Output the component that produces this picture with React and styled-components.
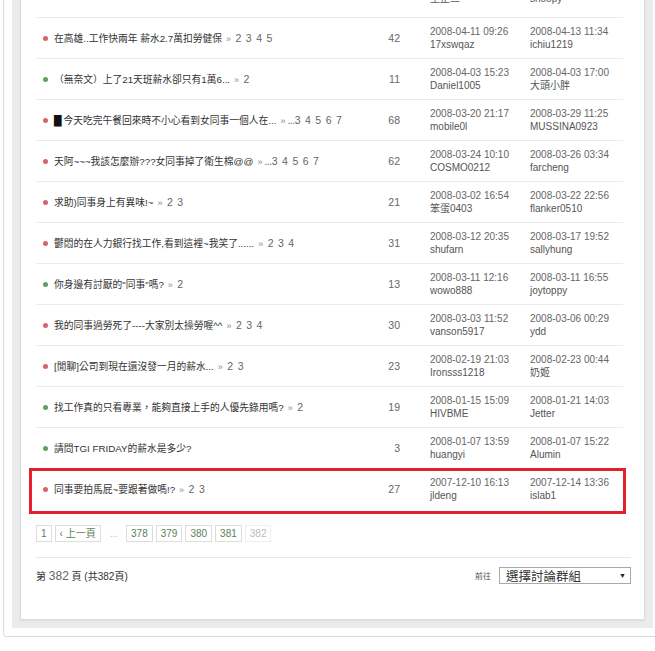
import React from 'react';
import styled, { createGlobalStyle, css } from 'styled-components';

const Global = createGlobalStyle`
  html, body { margin: 0; padding: 0; background: #fff; overflow: hidden; }
  body {
    font-family: "Liberation Sans", Arial, "Noto Sans CJK TC", sans-serif;
    color: #333;
  }
`;

const Outer = styled.div`
  box-sizing: border-box;
  width: 659px;
  margin: -52px 0 0 3px;
  padding: 8px;
  border: 1px solid #d9d9d9;
  border-radius: 3px;
  background: #fff;
`;

const Band = styled.div`
  background: #ececec;
  padding: 8px;
`;

const Panel = styled.div`
  background: #fff;
  border: 1px solid #dcdcdc;
  box-shadow: 0 1px 2px rgba(0, 0, 0, 0.08);
  padding: 0 13px 0 15px;
`;

const Table = styled.div`
  margin-right: 8px;
`;

const Row = styled.div`
  position: relative;
  box-sizing: border-box;
  display: grid;
  grid-template-columns: minmax(0, 1fr) 64px 100px 93px;
  align-items: center;
  height: ${p => (p.$tall ? 51 : 41)}px;
  border-top: 1px solid ${p => (p.$tall ? 'transparent' : '#ebebeb')};
  ${p =>
    p.$marked &&
    css`
      &::after {
        content: '';
        position: absolute;
        top: -1px;
        bottom: -5px;
        left: -7px;
        right: -3px;
        border: 3px solid #e3202b;
        pointer-events: none;
      }
    `}
`;

const TitleCell = styled.div`
  display: flex;
  align-items: center;
  padding-left: 7px;
  white-space: nowrap;
  overflow: hidden;
  font-size: 9.75px;
  color: #333;
`;

const Dot = styled.span`
  flex: none;
  width: 5px;
  height: 5px;
  border-radius: 50%;
  margin-right: 6px;
  background: ${p => (p.$hot ? '#d8636c' : '#5f9f5f')};
`;

const Block = styled.span`
  font-family: "DejaVu Sans", sans-serif;
  color: #111;
  margin-right: 2px;
`;

const Pages = styled.span`
  color: #666;
  font-size: 10.5px;
  margin-left: 4px;
`;

const Raquo = styled.span`
  font-size: 9px;
  color: #8a8a8a;
`;

const PageNum = styled.span`
  margin-left: 4.5px;
`;

const Lead = styled.span`
  margin-left: 2px;
  letter-spacing: -0.5px;
`;

const Count = styled.div`
  text-align: right;
  padding-right: 30px;
  font-size: 10.5px;
  color: #666;
`;

const Info = styled.div`
  font-size: 10px;
  line-height: 13px;
  color: #666;
  white-space: nowrap;
`;

const User = styled.div`
  color: #555;
`;

const Pager = styled.div`
  display: flex;
  align-items: center;
  gap: 3px;
  margin-top: 16px;
`;

const PageBox = styled.span`
  display: inline-block;
  border: 1px solid ${p => (p.$disabled ? '#eee' : '#ddd')};
  color: ${p => (p.$disabled ? '#bbb' : '#5b805b')};
  font-size: 10px;
  line-height: 15px;
  padding: 0 4px;
`;

const Ellipsis = styled.span`
  color: #bbb;
  font-size: 10px;
  padding: 0 5px 0 6px;
`;

const Footer = styled.div`
  display: flex;
  align-items: center;
  justify-content: space-between;
  margin-top: 15px;
  border-top: 1px solid #e6e6e6;
  padding: 9px 0 35px;
`;

const Summary = styled.div`
  font-size: 10px;
  color: #333;
`;

const Big = styled.span`
  font-size: 12px;
  color: #666;
`;

const Goto = styled.div`
  display: flex;
  align-items: center;
  font-size: 8px;
  color: #555;
`;

const Select = styled.div`
  box-sizing: border-box;
  margin-left: 8px;
  width: 132px;
  height: 17px;
  border: 1px solid #a9a9a9;
  display: flex;
  align-items: center;
  justify-content: space-between;
  padding: 0 4px 0 6px;
  font-size: 12.5px;
  color: #333;
`;

const Arrow = styled.span`
  font-size: 7px;
  color: #222;
`;

const topics = [
  { hot: true, title: '在高雄..工作快兩年 薪水2.7萬扣勞健保', pages: ['2', '3', '4', '5'], count: 42, d1: '2008-04-11 09:26', u1: '17xswqaz', d2: '2008-04-13 11:34', u2: 'ichiu1219' },
  { hot: false, title: '（無奈文）上了21天班薪水卻只有1萬6...', pages: ['2'], count: 11, d1: '2008-04-03 15:23', u1: 'Daniel1005', d2: '2008-04-03 17:00', u2: '大頭小胖' },
  { hot: true, block: true, title: '今天吃完午餐回來時不小心看到女同事一個人在...', lead: true, pages: ['3', '4', '5', '6', '7'], count: 68, d1: '2008-03-20 21:17', u1: 'mobile0l', d2: '2008-03-29 11:25', u2: 'MUSSINA0923' },
  { hot: true, title: '天阿~~~我該怎麼辦???女同事掉了衛生棉@@', lead: true, pages: ['3', '4', '5', '6', '7'], count: 62, d1: '2008-03-24 10:10', u1: 'COSMO0212', d2: '2008-03-26 03:34', u2: 'farcheng' },
  { hot: true, title: '求助)同事身上有異味!~', pages: ['2', '3'], count: 21, d1: '2008-03-02 16:54', u1: '笨蛋0403', d2: '2008-03-22 22:56', u2: 'flanker0510' },
  { hot: true, title: '鬱悶的在人力銀行找工作,看到這裡~我笑了......', pages: ['2', '3', '4'], count: 31, d1: '2008-03-12 20:35', u1: 'shufarn', d2: '2008-03-17 19:52', u2: 'sallyhung' },
  { hot: false, title: '你身邊有討厭的"同事"嗎?', pages: ['2'], count: 13, d1: '2008-03-11 12:16', u1: 'wowo888', d2: '2008-03-11 16:55', u2: 'joytoppy' },
  { hot: true, title: '我的同事過勞死了----大家別太操勞喔^^', pages: ['2', '3', '4'], count: 30, d1: '2008-03-03 11:52', u1: 'vanson5917', d2: '2008-03-06 00:29', u2: 'ydd' },
  { hot: true, title: '[閒聊]公司到現在還沒發一月的薪水...', pages: ['2', '3'], count: 23, d1: '2008-02-19 21:03', u1: 'Ironsss1218', d2: '2008-02-23 00:44', u2: '奶姬' },
  { hot: false, title: '找工作真的只看專業，能夠直接上手的人優先錄用嗎?', pages: ['2'], count: 19, d1: '2008-01-15 15:09', u1: 'HIVBME', d2: '2008-01-21 14:03', u2: 'Jetter' },
  { hot: false, title: '請問TGI FRIDAY的薪水是多少?', pages: [], count: 3, d1: '2008-01-07 13:59', u1: 'huangyi', d2: '2008-01-07 15:22', u2: 'Alumin' },
  { hot: true, marked: true, title: '同事要拍馬屁~要跟著做嗎!?', pages: ['2', '3'], count: 27, d1: '2007-12-10 16:13', u1: 'jldeng', d2: '2007-12-14 13:36', u2: 'islab1' },
];

const previous = { hot: true, title: '同事之間的相處之道', pages: ['2'], count: 15, d1: '2008-04-12 22:10', u1: '王正三', d2: '2008-04-15 09:41', u2: 'snoopy' };

function TopicRow({ t, tall }) {
  return (
    <Row $marked={t.marked} $tall={tall}>
      <TitleCell>
        <Dot $hot={t.hot} />
        {t.block && <Block>█</Block>}
        <span>{t.title}</span>
        {t.pages.length > 0 && (
          <Pages>
            <Raquo>»</Raquo>
            {t.lead && <Lead>...</Lead>}
            {t.pages.map((n, i) =>
              t.lead && i === 0 ? <span key={n}>{n}</span> : <PageNum key={n}>{n}</PageNum>
            )}
          </Pages>
        )}
      </TitleCell>
      <Count>{t.count}</Count>
      <Info>
        <div>{t.d1}</div>
        <User>{t.u1}</User>
      </Info>
      <Info>
        <div>{t.d2}</div>
        <User>{t.u2}</User>
      </Info>
    </Row>
  );
}

export default function App() {
  return (
    <>
      <Global />
      <Outer>
        <Band>
          <Panel>
            <Table>
              <TopicRow t={previous} tall />
              {topics.map((t, i) => (
                <TopicRow key={i} t={t} />
              ))}
            </Table>
            <Pager>
              <PageBox>1</PageBox>
              <PageBox>‹ 上一頁</PageBox>
              <Ellipsis>...</Ellipsis>
              <PageBox>378</PageBox>
              <PageBox>379</PageBox>
              <PageBox>380</PageBox>
              <PageBox>381</PageBox>
              <PageBox $disabled>382</PageBox>
            </Pager>
            <Footer>
              <Summary>
                第 <Big>382</Big> 頁 (共382頁)
              </Summary>
              <Goto>
                前往
                <Select>
                  <span>選擇討論群組</span>
                  <Arrow>▼</Arrow>
                </Select>
              </Goto>
            </Footer>
          </Panel>
        </Band>
      </Outer>
    </>
  );
}
